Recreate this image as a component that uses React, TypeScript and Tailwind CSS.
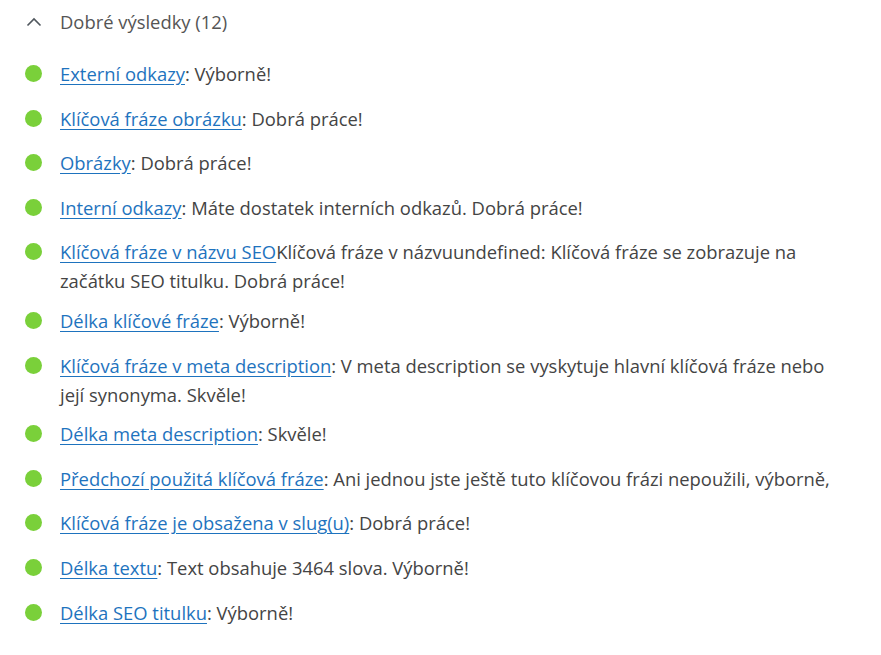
import React from "react";

type Item = { link: string; text: React.ReactNode };

const items: Item[] = [
  { link: "Externí odkazy", text: ": Výborně!" },
  { link: "Klíčová fráze obrázku", text: ": Dobrá práce!" },
  { link: "Obrázky", text: ": Dobrá práce!" },
  { link: "Interní odkazy", text: ": Máte dostatek interních odkazů. Dobrá práce!" },
  {
    link: "Klíčová fráze v názvu SEO",
    text: (
      <>
        Klíčová fráze v názvuundefined: Klíčová fráze se zobrazuje na
        <br />
        začátku SEO titulku. Dobrá práce!
      </>
    ),
  },
  { link: "Délka klíčové fráze", text: ": Výborně!" },
  {
    link: "Klíčová fráze v meta description",
    text: (
      <>
        : V meta description se vyskytuje hlavní klíčová fráze nebo
        <br />
        její synonyma. Skvěle!
      </>
    ),
  },
  { link: "Délka meta description", text: ": Skvěle!" },
  {
    link: "Předchozí použitá klíčová fráze",
    text: ": Ani jednou jste ještě tuto klíčovou frázi nepoužili, výborně,",
  },
  { link: "Klíčová fráze je obsažena v slug(u)", text: ": Dobrá práce!" },
  { link: "Délka textu", text: ": Text obsahuje 3464 slova. Výborně!" },
  { link: "Délka SEO titulku", text: ": Výborně!" },
];

export default function App() {
  return (
    <div
      className="w-[881px] h-[655px] bg-white text-[#444444] overflow-hidden"
      style={{ fontFamily: '"Open Sans", "Noto Sans", sans-serif' }}
    >
      <div className="flex items-center h-[43px] pl-[26px] text-[18.4px] text-[#555555]">
        <svg width="16" height="10" viewBox="0 0 16 10" className="mr-[18px]">
          <path d="M1.5 8.5 L8 2 L14.5 8.5" fill="none" stroke="#50575e" strokeWidth="1.6" />
        </svg>
        <span>Dobré výsledky (12)</span>
      </div>
      <ul className="pt-[16px] pr-[30px]">
        {items.map((it, i) => (
          <li key={i} className="flex min-h-[44.6px] pb-[10.6px] text-[18.4px] leading-[29px]">
            <span className="w-[60px] shrink-0 flex justify-start pl-[25px] pt-[6px]">
              <span className="block w-[17px] h-[17px] rounded-full bg-[#7ad03a]" />
            </span>
            <span className="whitespace-nowrap">
              <a href="#" className="text-[#1e73be] underline underline-offset-[3px]">
                {it.link}
              </a>
              {it.text}
            </span>
          </li>
        ))}
      </ul>
    </div>
  );
}
